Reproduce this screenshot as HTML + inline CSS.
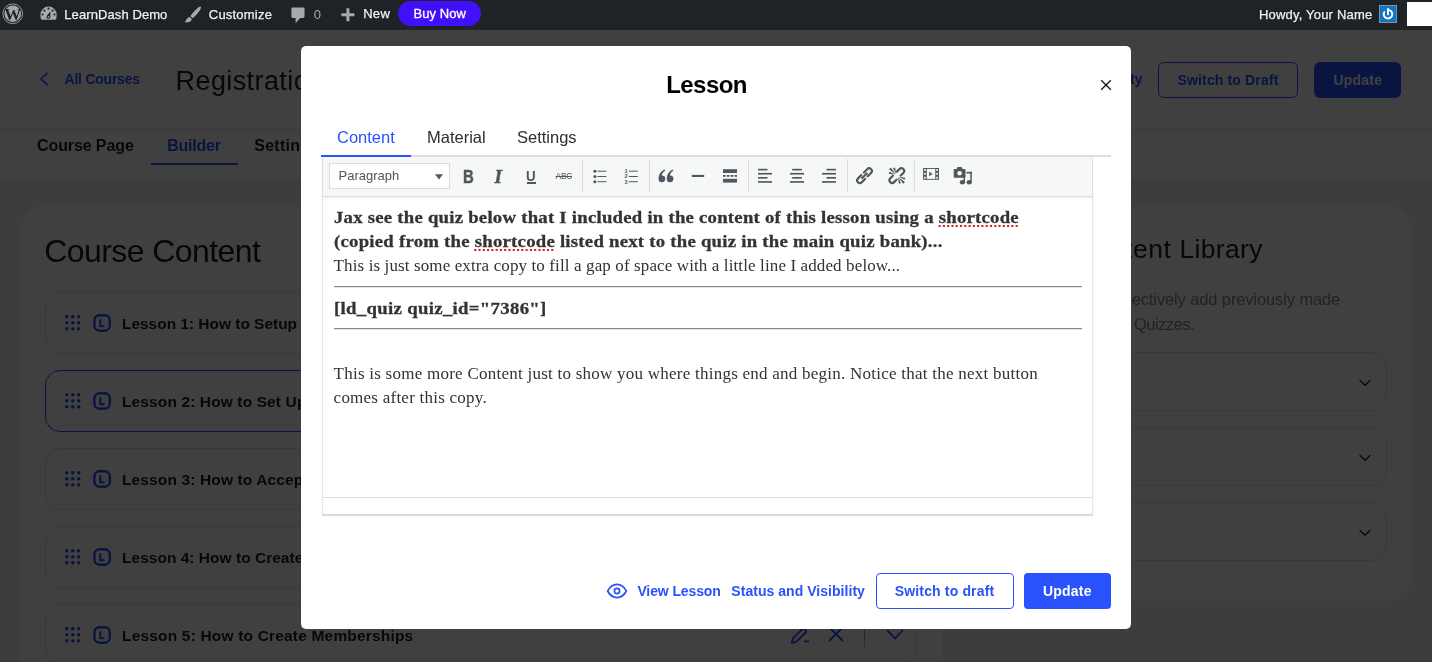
<!DOCTYPE html>
<html lang="en"><head><meta charset="utf-8"><title>Lesson</title>
<style>
html,body{margin:0;padding:0}
body{width:1432px;height:662px;overflow:hidden;position:relative;background:#f4f4ec;font-family:"Liberation Sans",Arial,sans-serif}
.t{position:absolute;white-space:pre;line-height:1;display:block}
.b{position:absolute;box-sizing:border-box;display:block}
#page,#overlay,#adminbar,#modal{position:absolute;left:0;top:0;width:1432px}
#page{height:662px}
.ly{position:absolute;left:0;top:0;width:100%;height:100%;will-change:transform}
#overlay{top:30px;height:632px;background:rgba(0,0,0,.75)}
#adminbar{height:30px;background:#1d2327}
#modal{left:301px;top:46px;width:830px;height:583px;background:#fff;border-radius:5px}
</style></head>
<body>
<div id="page"><div class="ly">
<div class="b" style="left:0px;top:30px;width:1432px;height:99px;background:#fff"></div>
<div class="b" style="left:0px;top:129px;width:1432px;height:1px;background:#e1e2e6"></div>
<div class="b" style="left:0px;top:130px;width:1432px;height:50px;background:#fff"></div>
<svg class="b" style="left:38px;top:71px;" width="12" height="16" viewBox="0 0 12 16"><path d="M9 2.3 L3 8 L9 13.7" fill="none" stroke="#2952fd" stroke-width="1.7" stroke-linecap="round" stroke-linejoin="round"/></svg>
<span class="t" style="left:64.60px;top:72px;font:700 14px/1 'Liberation Sans', Arial, sans-serif;color:#2952fd;letter-spacing:-0.24px;">All Courses</span>
<span class="t" style="left:175.60px;top:68px;font:400 27px/1 'Liberation Sans', Arial, sans-serif;color:#1b1d21;letter-spacing:0.4px;">Registration and Payments</span>
<span class="t" style="left:1009.00px;top:72px;font:700 14px/1 'Liberation Sans', Arial, sans-serif;color:#2952fd;letter-spacing:0.04px;">Status and Visibility</span>
<div class="b" style="left:1158px;top:62px;width:140px;height:36px;border:1px solid #2952fd;border-radius:6px"></div>
<span class="t" style="left:1177.50px;top:73px;font:700 14px/1 'Liberation Sans', Arial, sans-serif;color:#2952fd;letter-spacing:0.15px;">Switch to Draft</span>
<div class="b" style="left:1314px;top:62px;width:87px;height:36px;background:#2952fd;border-radius:6px"></div>
<span class="t" style="left:1333.50px;top:73px;font:700 14px/1 'Liberation Sans', Arial, sans-serif;color:#fff;letter-spacing:0.2px;">Update</span>
<span class="t" style="left:37.00px;top:138px;font:700 16px/1 'Liberation Sans', Arial, sans-serif;color:#1b1d21;letter-spacing:-0.1px;">Course Page</span>
<span class="t" style="left:167.20px;top:138px;font:700 16px/1 'Liberation Sans', Arial, sans-serif;color:#2952fd;letter-spacing:-0.22px;">Builder</span>
<span class="t" style="left:254.20px;top:138px;font:700 16px/1 'Liberation Sans', Arial, sans-serif;color:#1b1d21;letter-spacing:0.28px;">Settings</span>
<div class="b" style="left:151px;top:163px;width:87px;height:2px;background:#2952fd"></div>
<div class="b" style="left:21px;top:205px;width:921px;height:555px;background:#fff;border-radius:26px"></div>
<div class="b" style="left:966px;top:205px;width:445px;height:396px;background:#fff;border-radius:26px"></div>
<span class="t" style="left:44.30px;top:235px;font:400 32px/1 'Liberation Sans', Arial, sans-serif;color:#1b1d21;letter-spacing:-0.58px;">Course Content</span>
<div class="b" style="left:45px;top:292px;width:872px;height:62px;border:1px solid #dfe1e7;border-radius:15px"></div>
<svg class="b" style="left:64.5px;top:315.4px;" width="16" height="16" viewBox="0 0 16 16"><g fill="#2952fd"><circle cx="1.8" cy="1.8" r="1.75"/><circle cx="1.8" cy="7.75" r="1.75"/><circle cx="1.8" cy="13.700000000000001" r="1.75"/><circle cx="7.75" cy="1.8" r="1.75"/><circle cx="7.75" cy="7.75" r="1.75"/><circle cx="7.75" cy="13.700000000000001" r="1.75"/><circle cx="13.700000000000001" cy="1.8" r="1.75"/><circle cx="13.700000000000001" cy="7.75" r="1.75"/><circle cx="13.700000000000001" cy="13.700000000000001" r="1.75"/></g></svg>
<svg class="b" style="left:92px;top:313px;" width="20" height="20" viewBox="0 0 20 20"><rect x="2.4" y="2.3" width="15.4" height="15.4" rx="5" fill="none" stroke="#2952fd" stroke-width="2.4"/><path d="M8.3 6.2 V13.2 H12.6" fill="none" stroke="#2952fd" stroke-width="2.1"/></svg>
<span class="t" style="left:122.00px;top:316px;font:700 15.5px/1 'Liberation Sans', Arial, sans-serif;color:#1b1d21;letter-spacing:-0.03px;">Lesson 1: How to Setup Registration</span>
<svg class="b" style="left:789px;top:312px;" width="22" height="22" viewBox="0 0 22 22"><path d="M2.8 18.8 L3.8 14.5 L13.2 5.1 A1.6 1.6 0 0 1 15.5 5.1 L16.6 6.2 A1.6 1.6 0 0 1 16.6 8.5 L7.2 17.9 Z M15.6 17.4 H19.6" fill="none" stroke="#2952fd" stroke-width="1.85" stroke-linejoin="round" stroke-linecap="round"/></svg>
<svg class="b" style="left:827px;top:312px;" width="18" height="22" viewBox="0 0 18 22"><path d="M2.5 3.5 L15.5 16.5 M15.5 3.5 L2.5 16.5" stroke="#2952fd" stroke-width="1.9" stroke-linecap="round"/></svg>
<div class="b" style="left:863.5px;top:309px;width:1.0px;height:26px;background:#9a9db0"></div>
<svg class="b" style="left:885px;top:316px;" width="20" height="14" viewBox="0 0 20 14"><path d="M2.6 2.6 L10 10.4 L17.4 2.6" fill="none" stroke="#2952fd" stroke-width="1.9" stroke-linecap="round" stroke-linejoin="round"/></svg>
<div class="b" style="left:45px;top:370px;width:872px;height:62px;border:1px solid #2952fd;border-radius:15px"></div>
<svg class="b" style="left:64.5px;top:393.4px;" width="16" height="16" viewBox="0 0 16 16"><g fill="#2952fd"><circle cx="1.8" cy="1.8" r="1.75"/><circle cx="1.8" cy="7.75" r="1.75"/><circle cx="1.8" cy="13.700000000000001" r="1.75"/><circle cx="7.75" cy="1.8" r="1.75"/><circle cx="7.75" cy="7.75" r="1.75"/><circle cx="7.75" cy="13.700000000000001" r="1.75"/><circle cx="13.700000000000001" cy="1.8" r="1.75"/><circle cx="13.700000000000001" cy="7.75" r="1.75"/><circle cx="13.700000000000001" cy="13.700000000000001" r="1.75"/></g></svg>
<svg class="b" style="left:92px;top:391px;" width="20" height="20" viewBox="0 0 20 20"><rect x="2.4" y="2.3" width="15.4" height="15.4" rx="5" fill="none" stroke="#2952fd" stroke-width="2.4"/><path d="M8.3 6.2 V13.2 H12.6" fill="none" stroke="#2952fd" stroke-width="2.1"/></svg>
<span class="t" style="left:122.00px;top:394px;font:700 15.5px/1 'Liberation Sans', Arial, sans-serif;color:#1b1d21;letter-spacing:0.12px;">Lesson 2: How to Set Up Payments</span>
<svg class="b" style="left:789px;top:390px;" width="22" height="22" viewBox="0 0 22 22"><path d="M2.8 18.8 L3.8 14.5 L13.2 5.1 A1.6 1.6 0 0 1 15.5 5.1 L16.6 6.2 A1.6 1.6 0 0 1 16.6 8.5 L7.2 17.9 Z M15.6 17.4 H19.6" fill="none" stroke="#2952fd" stroke-width="1.85" stroke-linejoin="round" stroke-linecap="round"/></svg>
<svg class="b" style="left:827px;top:390px;" width="18" height="22" viewBox="0 0 18 22"><path d="M2.5 3.5 L15.5 16.5 M15.5 3.5 L2.5 16.5" stroke="#2952fd" stroke-width="1.9" stroke-linecap="round"/></svg>
<div class="b" style="left:863.5px;top:387px;width:1.0px;height:26px;background:#9a9db0"></div>
<svg class="b" style="left:885px;top:394px;" width="20" height="14" viewBox="0 0 20 14"><path d="M2.6 2.6 L10 10.4 L17.4 2.6" fill="none" stroke="#2952fd" stroke-width="1.9" stroke-linecap="round" stroke-linejoin="round"/></svg>
<div class="b" style="left:45px;top:448px;width:872px;height:62px;border:1px solid #dfe1e7;border-radius:15px"></div>
<svg class="b" style="left:64.5px;top:471.4px;" width="16" height="16" viewBox="0 0 16 16"><g fill="#2952fd"><circle cx="1.8" cy="1.8" r="1.75"/><circle cx="1.8" cy="7.75" r="1.75"/><circle cx="1.8" cy="13.700000000000001" r="1.75"/><circle cx="7.75" cy="1.8" r="1.75"/><circle cx="7.75" cy="7.75" r="1.75"/><circle cx="7.75" cy="13.700000000000001" r="1.75"/><circle cx="13.700000000000001" cy="1.8" r="1.75"/><circle cx="13.700000000000001" cy="7.75" r="1.75"/><circle cx="13.700000000000001" cy="13.700000000000001" r="1.75"/></g></svg>
<svg class="b" style="left:92px;top:469px;" width="20" height="20" viewBox="0 0 20 20"><rect x="2.4" y="2.3" width="15.4" height="15.4" rx="5" fill="none" stroke="#2952fd" stroke-width="2.4"/><path d="M8.3 6.2 V13.2 H12.6" fill="none" stroke="#2952fd" stroke-width="2.1"/></svg>
<span class="t" style="left:122.00px;top:472px;font:700 15.5px/1 'Liberation Sans', Arial, sans-serif;color:#1b1d21;letter-spacing:0.13px;">Lesson 3: How to Accept Payments</span>
<svg class="b" style="left:789px;top:468px;" width="22" height="22" viewBox="0 0 22 22"><path d="M2.8 18.8 L3.8 14.5 L13.2 5.1 A1.6 1.6 0 0 1 15.5 5.1 L16.6 6.2 A1.6 1.6 0 0 1 16.6 8.5 L7.2 17.9 Z M15.6 17.4 H19.6" fill="none" stroke="#2952fd" stroke-width="1.85" stroke-linejoin="round" stroke-linecap="round"/></svg>
<svg class="b" style="left:827px;top:468px;" width="18" height="22" viewBox="0 0 18 22"><path d="M2.5 3.5 L15.5 16.5 M15.5 3.5 L2.5 16.5" stroke="#2952fd" stroke-width="1.9" stroke-linecap="round"/></svg>
<div class="b" style="left:863.5px;top:465px;width:1.0px;height:26px;background:#9a9db0"></div>
<svg class="b" style="left:885px;top:472px;" width="20" height="14" viewBox="0 0 20 14"><path d="M2.6 2.6 L10 10.4 L17.4 2.6" fill="none" stroke="#2952fd" stroke-width="1.9" stroke-linecap="round" stroke-linejoin="round"/></svg>
<div class="b" style="left:45px;top:526px;width:872px;height:62px;border:1px solid #dfe1e7;border-radius:15px"></div>
<svg class="b" style="left:64.5px;top:549.4px;" width="16" height="16" viewBox="0 0 16 16"><g fill="#2952fd"><circle cx="1.8" cy="1.8" r="1.75"/><circle cx="1.8" cy="7.75" r="1.75"/><circle cx="1.8" cy="13.700000000000001" r="1.75"/><circle cx="7.75" cy="1.8" r="1.75"/><circle cx="7.75" cy="7.75" r="1.75"/><circle cx="7.75" cy="13.700000000000001" r="1.75"/><circle cx="13.700000000000001" cy="1.8" r="1.75"/><circle cx="13.700000000000001" cy="7.75" r="1.75"/><circle cx="13.700000000000001" cy="13.700000000000001" r="1.75"/></g></svg>
<svg class="b" style="left:92px;top:547px;" width="20" height="20" viewBox="0 0 20 20"><rect x="2.4" y="2.3" width="15.4" height="15.4" rx="5" fill="none" stroke="#2952fd" stroke-width="2.4"/><path d="M8.3 6.2 V13.2 H12.6" fill="none" stroke="#2952fd" stroke-width="2.1"/></svg>
<span class="t" style="left:122.00px;top:550px;font:700 15.5px/1 'Liberation Sans', Arial, sans-serif;color:#1b1d21;letter-spacing:0.02px;">Lesson 4: How to Create Courses</span>
<svg class="b" style="left:789px;top:546px;" width="22" height="22" viewBox="0 0 22 22"><path d="M2.8 18.8 L3.8 14.5 L13.2 5.1 A1.6 1.6 0 0 1 15.5 5.1 L16.6 6.2 A1.6 1.6 0 0 1 16.6 8.5 L7.2 17.9 Z M15.6 17.4 H19.6" fill="none" stroke="#2952fd" stroke-width="1.85" stroke-linejoin="round" stroke-linecap="round"/></svg>
<svg class="b" style="left:827px;top:546px;" width="18" height="22" viewBox="0 0 18 22"><path d="M2.5 3.5 L15.5 16.5 M15.5 3.5 L2.5 16.5" stroke="#2952fd" stroke-width="1.9" stroke-linecap="round"/></svg>
<div class="b" style="left:863.5px;top:543px;width:1.0px;height:26px;background:#9a9db0"></div>
<svg class="b" style="left:885px;top:550px;" width="20" height="14" viewBox="0 0 20 14"><path d="M2.6 2.6 L10 10.4 L17.4 2.6" fill="none" stroke="#2952fd" stroke-width="1.9" stroke-linecap="round" stroke-linejoin="round"/></svg>
<div class="b" style="left:45px;top:604px;width:872px;height:62px;border:1px solid #dfe1e7;border-radius:15px"></div>
<svg class="b" style="left:64.5px;top:627.4px;" width="16" height="16" viewBox="0 0 16 16"><g fill="#2952fd"><circle cx="1.8" cy="1.8" r="1.75"/><circle cx="1.8" cy="7.75" r="1.75"/><circle cx="1.8" cy="13.700000000000001" r="1.75"/><circle cx="7.75" cy="1.8" r="1.75"/><circle cx="7.75" cy="7.75" r="1.75"/><circle cx="7.75" cy="13.700000000000001" r="1.75"/><circle cx="13.700000000000001" cy="1.8" r="1.75"/><circle cx="13.700000000000001" cy="7.75" r="1.75"/><circle cx="13.700000000000001" cy="13.700000000000001" r="1.75"/></g></svg>
<svg class="b" style="left:92px;top:625px;" width="20" height="20" viewBox="0 0 20 20"><rect x="2.4" y="2.3" width="15.4" height="15.4" rx="5" fill="none" stroke="#2952fd" stroke-width="2.4"/><path d="M8.3 6.2 V13.2 H12.6" fill="none" stroke="#2952fd" stroke-width="2.1"/></svg>
<span class="t" style="left:122.00px;top:628px;font:700 15.5px/1 'Liberation Sans', Arial, sans-serif;color:#1b1d21;letter-spacing:0.18px;">Lesson 5: How to Create Memberships</span>
<svg class="b" style="left:789px;top:624px;" width="22" height="22" viewBox="0 0 22 22"><path d="M2.8 18.8 L3.8 14.5 L13.2 5.1 A1.6 1.6 0 0 1 15.5 5.1 L16.6 6.2 A1.6 1.6 0 0 1 16.6 8.5 L7.2 17.9 Z M15.6 17.4 H19.6" fill="none" stroke="#2952fd" stroke-width="1.85" stroke-linejoin="round" stroke-linecap="round"/></svg>
<svg class="b" style="left:827px;top:624px;" width="18" height="22" viewBox="0 0 18 22"><path d="M2.5 3.5 L15.5 16.5 M15.5 3.5 L2.5 16.5" stroke="#2952fd" stroke-width="1.9" stroke-linecap="round"/></svg>
<div class="b" style="left:863.5px;top:621px;width:1.0px;height:26px;background:#9a9db0"></div>
<svg class="b" style="left:885px;top:628px;" width="20" height="14" viewBox="0 0 20 14"><path d="M2.6 2.6 L10 10.4 L17.4 2.6" fill="none" stroke="#2952fd" stroke-width="1.9" stroke-linecap="round" stroke-linejoin="round"/></svg>
<span class="t" style="right:169.27px;top:236px;font:400 26.5px/1 'Liberation Sans', Arial, sans-serif;color:#1b1d21;letter-spacing:0.33px;"><span style="letter-spacing:0.55px">Content </span>Library</span>
<span class="t" style="right:91.82px;top:291px;font:400 16.5px/1 'Liberation Sans', Arial, sans-serif;color:#8089a0;letter-spacing:-0.12px;">Search or selectively add previously made</span>
<span class="t" style="right:237.90px;top:316px;font:400 16.5px/1 'Liberation Sans', Arial, sans-serif;color:#8089a0;letter-spacing:-0.5px;">Lessons, Topics and Quizzes.</span>
<div class="b" style="left:990px;top:352px;width:397px;height:59px;border:1px solid #dfe1e7;border-radius:15px"></div>
<svg class="b" style="left:1357.5px;top:377.5px;" width="14" height="10" viewBox="0 0 14 10"><path d="M2 2.4 L7 7.2 L12 2.4" fill="none" stroke="#111" stroke-width="1.3" stroke-linecap="round" stroke-linejoin="round"/></svg>
<div class="b" style="left:990px;top:427px;width:397px;height:59px;border:1px solid #dfe1e7;border-radius:15px"></div>
<svg class="b" style="left:1357.5px;top:452.5px;" width="14" height="10" viewBox="0 0 14 10"><path d="M2 2.4 L7 7.2 L12 2.4" fill="none" stroke="#111" stroke-width="1.3" stroke-linecap="round" stroke-linejoin="round"/></svg>
<div class="b" style="left:990px;top:502px;width:397px;height:59px;border:1px solid #dfe1e7;border-radius:15px"></div>
<svg class="b" style="left:1357.5px;top:527.5px;" width="14" height="10" viewBox="0 0 14 10"><path d="M2 2.4 L7 7.2 L12 2.4" fill="none" stroke="#111" stroke-width="1.3" stroke-linecap="round" stroke-linejoin="round"/></svg>
</div></div>
<div id="overlay"></div>
<div id="adminbar"><div class="ly">
<svg class="b" style="left:2.4px;top:3.3px;" width="21.5" height="21.5" viewBox="0 0 21.5 21.5"><circle cx="10.75" cy="10.75" r="9.85" fill="none" stroke="#a7aaad" stroke-width="0.9"/><circle cx="10.75" cy="10.75" r="8.3" fill="#a7aaad"/><text x="10.75" y="16.5" text-anchor="middle" font-family="Liberation Serif, serif" font-weight="700" font-size="17" fill="#1d2327">W</text></svg>
<svg class="b" style="left:39.5px;top:6.3px;" width="17" height="14" viewBox="0 0 17 14"><path d="M0.4 8.8 A8.15 8.3 0 0 1 16.7 8.8 L16.4 12.3 Q16.2 13.7 14.9 13.7 H2.2 Q0.9 13.7 0.7 12.3 Z" fill="#a7aaad"/><g fill="#1d2327"><circle cx="2.5" cy="8.5" r="1.1"/><circle cx="4.4" cy="4.6" r="1.1"/><circle cx="8.5" cy="2.6" r="1.1"/><circle cx="12.6" cy="4.6" r="1.1"/><circle cx="14.5" cy="8.5" r="1.1"/><path d="M10.5 5.2 L10.3 10.2 A1.95 1.95 0 1 1 7.1 9.4 Z"/></g><circle cx="8.5" cy="10.8" r="0.85" fill="#a7aaad"/></svg>
<span class="t" style="left:64.30px;top:8px;font:400 13px/1 'Liberation Sans', Arial, sans-serif;color:#f0f0f1;letter-spacing:0.09px;-webkit-text-stroke:0.25px #f0f0f1;">LearnDash Demo</span>
<svg class="b" style="left:184px;top:5.5px;" width="18" height="17" viewBox="0 0 18 17"><path d="M16.6 0.6 C17.6 1.4 16.6 3.4 15 5.6 C13 8.4 10.4 11.2 8.6 12.2 L6.4 10.2 C7.6 8.2 10 5.4 12.6 3 C14.4 1.4 15.8 0 16.6 0.6 Z" fill="#a7aaad"/><path d="M5.6 11 L7.8 13 C7.6 15.6 4.4 16.8 0.4 16.2 C2.6 15 2.4 11.6 5.6 11 Z" fill="#a7aaad"/></svg>
<span class="t" style="left:208.80px;top:8px;font:400 13px/1 'Liberation Sans', Arial, sans-serif;color:#f0f0f1;letter-spacing:0.21px;-webkit-text-stroke:0.25px #f0f0f1;">Customize</span>
<svg class="b" style="left:290.5px;top:6.5px;" width="14" height="17" viewBox="0 0 14 17"><path d="M1.6 0.5 H12.2 A1.3 1.3 0 0 1 13.5 1.8 V9.6 A1.3 1.3 0 0 1 12.2 10.9 H9.2 L4.6 16.2 V10.9 H1.6 A1.3 1.3 0 0 1 0.4 9.6 V1.8 A1.3 1.3 0 0 1 1.6 0.5 Z" fill="#a7aaad"/></svg>
<span class="t" style="left:313.80px;top:8px;font:400 13px/1 'Liberation Sans', Arial, sans-serif;color:#a4a9ae;letter-spacing:0px;">0</span>
<svg class="b" style="left:340.5px;top:8px;" width="14" height="14" viewBox="0 0 14 14"><path d="M5.4 0.2 H8.4 V5.2 H13.4 V8.2 H8.4 V13.2 H5.4 V8.2 H0.4 V5.2 H5.4 Z" fill="#a7aaad"/></svg>
<span class="t" style="left:363.20px;top:7px;font:400 13px/1 'Liberation Sans', Arial, sans-serif;color:#f0f0f1;letter-spacing:0.29px;-webkit-text-stroke:0.25px #f0f0f1;">New</span>
<div class="b" style="left:398px;top:1px;width:83px;height:25px;background:#4010fa;border-radius:12.5px"></div>
<span class="t" style="left:413.60px;top:7px;font:400 13px/1 'Liberation Sans', Arial, sans-serif;color:#fff;letter-spacing:0.05px;-webkit-text-stroke:0.3px #fff;">Buy Now</span>
<span class="t" style="left:1259.00px;top:8px;font:400 13px/1 'Liberation Sans', Arial, sans-serif;color:#f0f0f1;letter-spacing:0.19px;-webkit-text-stroke:0.25px #f0f0f1;">Howdy, Your Name</span>
<div class="b" style="left:1379px;top:5px;width:18px;height:18px;background:#0f75c6;border:1px solid #8c8f94"></div>
<svg class="b" style="left:1381px;top:7px;" width="14" height="14" viewBox="0 0 14 14"><path d="M7 2.9 A4.3 4.3 0 1 1 3.3 5" fill="none" stroke="#fff" stroke-width="1.9" stroke-linecap="round"/><path d="M7 2 V7.2" stroke="#fff" stroke-width="2" stroke-linecap="round"/></svg>
<div class="b" style="left:1407px;top:2px;width:25px;height:24px;background:#fff"></div>
</div></div>
<div id="modal"><div class="ly">
<span class="t" style="left:365.20px;top:27px;font:700 24px/1 'Liberation Sans', Arial, sans-serif;color:#000;letter-spacing:-0.55px;">Lesson</span>
<svg class="b" style="left:798px;top:32px;" width="14" height="14" viewBox="0 0 14 14"><path d="M2.2 2.2 L11.8 11.8 M11.8 2.2 L2.2 11.8" stroke="#111" stroke-width="1.25" stroke-linecap="butt"/></svg>
<div class="b" style="left:20px;top:109px;width:790px;height:2px;background:#dadee6"></div>
<div class="b" style="left:20px;top:109px;width:90px;height:2px;background:#2952fd"></div>
<span class="t" style="left:36.00px;top:83px;font:400 16.5px/1 'Liberation Sans', Arial, sans-serif;color:#2952fd;letter-spacing:0px;">Content</span>
<span class="t" style="left:126.00px;top:83px;font:400 16.5px/1 'Liberation Sans', Arial, sans-serif;color:#2b2e35;letter-spacing:0px;">Material</span>
<span class="t" style="left:216.00px;top:83px;font:400 16.5px/1 'Liberation Sans', Arial, sans-serif;color:#2b2e35;letter-spacing:0px;">Settings</span>
<div class="b" style="left:21px;top:111px;width:771px;height:358px;background:#fff;border:1px solid #e2e4e7;border-top:none;border-bottom-color:#d2d4d7;box-shadow:0 1px 1px rgba(0,0,0,.12)"></div>
<div class="b" style="left:22px;top:111px;width:769px;height:40px;background:#f6f7f7;border-bottom:1px solid #dcdcde;box-shadow:0 1px 2px rgba(0,0,0,.08)"></div>
<div class="b" style="left:22px;top:451px;width:769px;height:1px;background:#dcdcde"></div>
<div class="b" style="left:28px;top:117px;width:121px;height:26px;background:#fff;border:1px solid #dcdcde"></div>
<span class="t" style="left:37.50px;top:123px;font:400 13px/1 'Liberation Sans', Arial, sans-serif;color:#50575e;letter-spacing:0px;">Paragraph</span>
<svg class="b" style="left:133px;top:127px;" width="10" height="8" viewBox="0 0 10 8"><path d="M1 1.2 H9 L5 6.6 Z" fill="#50575e"/></svg>
<div class="b" style="left:281.0px;top:113px;width:1.0px;height:33px;background:#dcdcde"></div>
<div class="b" style="left:348.0px;top:113px;width:1.0px;height:33px;background:#dcdcde"></div>
<div class="b" style="left:447.0px;top:113px;width:1.0px;height:33px;background:#dcdcde"></div>
<div class="b" style="left:546.0px;top:113px;width:1.0px;height:33px;background:#dcdcde"></div>
<div class="b" style="left:613.0px;top:113px;width:1.0px;height:33px;background:#dcdcde"></div>
<span class="t" style="left:161.90px;top:123px;font:700 17.5px/1 'Liberation Sans', Arial, sans-serif;color:#50575e;letter-spacing:0px;transform:scaleX(.85);transform-origin:0 0;-webkit-text-stroke:0.45px #50575e;">B</span>
<span class="t" style="left:193.60px;top:121px;font:700 19px/1 'Liberation Serif', 'Times New Roman', serif;color:#50575e;letter-spacing:0px;font-style:italic;-webkit-text-stroke:0.5px #50575e;">I</span>
<span class="t" style="left:225.10px;top:123px;font:700 14.5px/1 'Liberation Sans', Arial, sans-serif;color:#50575e;letter-spacing:0px;transform:scaleX(.92);transform-origin:0 0;">U</span>
<div class="b" style="left:226px;top:136px;width:9px;height:2px;background:#50575e"></div>
<span class="t" style="left:254.60px;top:126px;font:400 8.5px/1 'Liberation Sans', Arial, sans-serif;color:#50575e;letter-spacing:-0.35px;text-decoration:line-through;text-decoration-thickness:0.8px;">ABC</span>
<svg class="b" style="left:288.5px;top:120px;" width="20" height="20" viewBox="0 0 20 20"><g fill="#50575e"><circle cx="4.9" cy="5.2" r="1.55"/><circle cx="4.9" cy="10.5" r="1.55"/><circle cx="4.9" cy="15.7" r="1.55"/><rect x="7.4" y="4.7" width="9" height="1"/><rect x="7.4" y="10" width="9" height="1"/><rect x="7.4" y="15.2" width="9" height="1"/></g></svg>
<svg class="b" style="left:320.20000000000005px;top:120px;" width="20" height="20" viewBox="0 0 20 20"><g fill="#50575e"><rect x="7.8" y="4.7" width="9" height="1"/><rect x="7.8" y="10" width="9" height="1"/><rect x="7.8" y="15.2" width="9" height="1"/></g><g font-family="Liberation Sans, sans-serif" font-weight="700" font-size="5.8" fill="#50575e"><text x="3.4" y="7.1">1</text><text x="3.4" y="12.4">2</text><text x="3.4" y="17.7">3</text></g></svg>
<svg class="b" style="left:355.20000000000005px;top:120px;" width="20" height="20" viewBox="0 0 20 20"><g fill="#50575e"><path d="M2.6 13 C2.6 9 4.4 5.6 8.6 3.6 L9.2 4.8 C6.8 6.2 5.9 7.9 5.8 9.6 A3.3 3.3 0 1 1 2.6 13 Z"/><path d="M10.8 13 C10.8 9 12.6 5.6 16.8 3.6 L17.4 4.8 C15 6.2 14.1 7.9 14 9.6 A3.3 3.3 0 1 1 10.8 13 Z"/></g></svg>
<svg class="b" style="left:387px;top:120px;" width="20" height="20" viewBox="0 0 20 20"><rect x="3.8" y="8.9" width="12.4" height="2.1" fill="#50575e"/></svg>
<svg class="b" style="left:419px;top:120px;" width="20" height="20" viewBox="0 0 20 20"><g fill="#50575e"><rect x="3" y="3.2" width="14" height="3.8"/><rect x="3" y="12.8" width="14" height="3.8"/><rect x="3" y="9" width="2.6" height="1.8"/><rect x="6.8" y="9" width="2.6" height="1.8"/><rect x="10.6" y="9" width="2.6" height="1.8"/><rect x="14.4" y="9" width="2.6" height="1.8"/></g></svg>
<svg class="b" style="left:454px;top:120px;" width="20" height="20" viewBox="0 0 20 20"><g fill="#50575e"><rect x="3" y="2.8" width="9.5" height="1.65"/><rect x="3" y="6.9" width="14" height="1.65"/><rect x="3" y="11" width="9.5" height="1.65"/><rect x="3" y="15.1" width="14" height="1.65"/></g></svg>
<svg class="b" style="left:486px;top:120px;" width="20" height="20" viewBox="0 0 20 20"><g fill="#50575e"><rect x="5.2" y="2.8" width="9.6" height="1.65"/><rect x="3" y="6.9" width="14" height="1.65"/><rect x="5.2" y="11" width="9.6" height="1.65"/><rect x="3" y="15.1" width="14" height="1.65"/></g></svg>
<svg class="b" style="left:518px;top:120px;" width="20" height="20" viewBox="0 0 20 20"><g fill="#50575e"><rect x="7.5" y="2.8" width="9.5" height="1.65"/><rect x="3" y="6.9" width="14" height="1.65"/><rect x="7.5" y="11" width="9.5" height="1.65"/><rect x="3" y="15.1" width="14" height="1.65"/></g></svg>
<svg class="b" style="left:553.3px;top:120px;" width="20" height="20" viewBox="0 0 20 20"><g transform="translate(10.5 9.7) rotate(-45)" fill="none" stroke="#50575e" stroke-width="2.2" stroke-linecap="round"><path d="M1.8499999999999996 -2.7 H6.55 A2.7 2.7 0 0 1 6.55 2.7 H1.8499999999999996"/><path d="M-1.8499999999999996 -2.7 H-6.55 A2.7 2.7 0 0 0 -6.55 2.7 H-1.8499999999999996"/><path d="M-3.2 0 H3.2"/></g></svg>
<svg class="b" style="left:585.5px;top:120px;" width="20" height="20" viewBox="0 0 20 20"><g transform="translate(9.8 9.6) rotate(-45)" fill="none" stroke="#50575e" stroke-width="2.2" stroke-linecap="round"><path d="M2.9 -2.7 H6.5 A2.7 2.7 0 0 1 6.5 2.7 H2.9"/><path d="M-2.9 -2.7 H-6.5 A2.7 2.7 0 0 0 -6.5 2.7 H-2.9"/></g><path d="M8.88 8.38 L3.78 1.59 L2.09 3.28 Z" fill="#50575e"/><path d="M9.05 8.04 L8.12 1.61 L6.03 2.29 Z" fill="#50575e"/><path d="M8.53 8.58 L2.30 5.65 L1.69 7.76 Z" fill="#50575e"/><path d="M11.12 11.02 L16.22 17.81 L17.91 16.12 Z" fill="#50575e"/><path d="M10.95 11.36 L11.88 17.79 L13.97 17.11 Z" fill="#50575e"/><path d="M11.47 10.82 L17.70 13.75 L18.31 11.64 Z" fill="#50575e"/></svg>
<svg class="b" style="left:620px;top:120px;" width="20" height="20" viewBox="0 0 20 20"><rect x="2.1" y="2" width="15.9" height="11.8" fill="#50575e"/><g fill="#f6f7f7"><rect x="5.8" y="2.9" width="8.5" height="10"/><rect x="3.1" y="3.1" width="1.8" height="1.8"/><rect x="3.1" y="6.9" width="1.8" height="1.8"/><rect x="3.1" y="10.8" width="1.8" height="1.8"/><rect x="15.2" y="3.1" width="1.8" height="1.8"/><rect x="15.2" y="6.9" width="1.8" height="1.8"/><rect x="15.2" y="10.8" width="1.8" height="1.8"/></g><path d="M8.2 5.8 L11.7 8 L8.2 10.3 Z" fill="#50575e"/></svg>
<svg class="b" style="left:652.3px;top:120px;" width="20" height="20" viewBox="0 0 20 20"><g fill="#50575e"><ellipse cx="9.4" cy="16.3" rx="2.6" ry="2.2"/><ellipse cx="16.2" cy="16.3" rx="2.6" ry="2.2"/><rect x="17.3" y="5.8" width="1.5" height="10.6"/><rect x="13.4" y="5.8" width="5.4" height="1.7"/><rect x="10.5" y="11" width="1.5" height="5.4"/><rect x="0.7" y="3.1" width="11.8" height="8.6" rx="0.7"/><path d="M3.6 3.4 L4.4 1.1 H8.8 L9.6 3.4 Z"/></g><circle cx="6.6" cy="7.2" r="2.3" fill="#f6f7f7"/></svg>
<span class="t" style="left:32.60px;top:163px;font:700 17.5px/1 'Liberation Serif', 'Times New Roman', serif;color:#333;letter-spacing:0.23px;transform:scaleX(1.07);transform-origin:0 0;-webkit-text-stroke:0.3px #333;">Jax see the quiz below that I included in the content of this lesson using a <span style="text-decoration:underline;text-decoration-style:dotted;text-decoration-color:#e02020;text-decoration-thickness:1.5px;text-underline-offset:2px;">shortcode</span></span>
<span class="t" style="left:32.60px;top:187px;font:700 17.5px/1 'Liberation Serif', 'Times New Roman', serif;color:#333;letter-spacing:0.235px;transform:scaleX(1.07);transform-origin:0 0;-webkit-text-stroke:0.3px #333;">(copied from the <span style="text-decoration:underline;text-decoration-style:dotted;text-decoration-color:#e02020;text-decoration-thickness:1.5px;text-underline-offset:2px;">shortcode</span> listed next to the quiz in the main quiz bank)...</span>
<span class="t" style="left:32.60px;top:211px;font:400 17px/1 'Liberation Serif', 'Times New Roman', serif;color:#333;letter-spacing:0.117px;">This is just some extra copy to fill a gap of space with a little line I added below...</span>
<div class="b" style="left:33px;top:240px;width:748px;height:1px;background:#8c8c8c"></div>
<div class="b" style="left:33px;top:241px;width:748px;height:1px;background:#e4e4e4"></div>
<span class="t" style="left:32.60px;top:254px;font:700 17.5px/1 'Liberation Serif', 'Times New Roman', serif;color:#333;letter-spacing:0.31px;transform:scaleX(1.07);transform-origin:0 0;-webkit-text-stroke:0.3px #333;">[ld_quiz quiz_id="7386"]</span>
<div class="b" style="left:33px;top:282px;width:748px;height:1px;background:#8c8c8c"></div>
<div class="b" style="left:33px;top:283px;width:748px;height:1px;background:#e4e4e4"></div>
<span class="t" style="left:32.60px;top:319px;font:400 17px/1 'Liberation Serif', 'Times New Roman', serif;color:#333;letter-spacing:0.245px;">This is some more Content just to show you where things end and begin. Notice that the next button</span>
<span class="t" style="left:32.60px;top:343px;font:400 17px/1 'Liberation Serif', 'Times New Roman', serif;color:#333;letter-spacing:0.24px;">comes after this copy.</span>
<svg class="b" style="left:305px;top:536px;" width="22" height="18" viewBox="0 0 22 18"><path d="M1.6 9 C4 4.6 7.2 2.4 11 2.4 C14.8 2.4 18 4.6 20.4 9 C18 13.4 14.8 15.6 11 15.6 C7.2 15.6 4 13.4 1.6 9 Z" fill="none" stroke="#2952fd" stroke-width="1.7" stroke-linejoin="round"/><circle cx="11" cy="9" r="2.6" fill="none" stroke="#2952fd" stroke-width="1.7"/></svg>
<span class="t" style="left:336.40px;top:538px;font:700 14px/1 'Liberation Sans', Arial, sans-serif;color:#2952fd;letter-spacing:-0.11px;">View Lesson</span>
<span class="t" style="left:430.30px;top:538px;font:700 14px/1 'Liberation Sans', Arial, sans-serif;color:#2952fd;letter-spacing:0.04px;">Status and Visibility</span>
<div class="b" style="left:575px;top:527px;width:138px;height:36px;border:1px solid #2952fd;border-radius:4px"></div>
<span class="t" style="left:593.80px;top:538px;font:700 14px/1 'Liberation Sans', Arial, sans-serif;color:#2952fd;letter-spacing:0.15px;">Switch to draft</span>
<div class="b" style="left:723px;top:527px;width:87px;height:36px;background:#2952fd;border-radius:4px"></div>
<span class="t" style="left:742.00px;top:538px;font:700 14px/1 'Liberation Sans', Arial, sans-serif;color:#fff;letter-spacing:0.2px;">Update</span>
</div></div>
</body></html>
